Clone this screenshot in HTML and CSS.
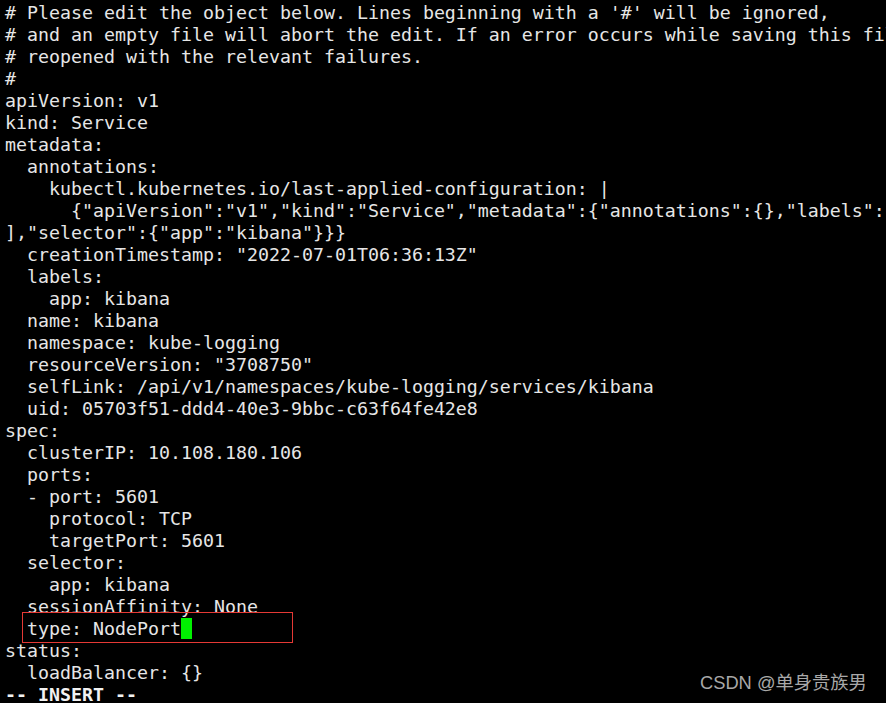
FILE: index.html
```html
<!DOCTYPE html>
<html lang="en">
<head>
<meta charset="utf-8">
<title>kubectl edit</title>
<link rel="stylesheet" href="styles.css">
</head>
<body>
<div class="term">
<pre class="buf"># Please edit the object below. Lines beginning with a '#' will be ignored,
# and an empty file will abort the edit. If an error occurs while saving this file will be
# reopened with the relevant failures.
#
apiVersion: v1
kind: Service
metadata:
  annotations:
    kubectl.kubernetes.io/last-applied-configuration: |
      {"apiVersion":"v1","kind":"Service","metadata":{"annotations":{},"labels":{"app":"kibana"}
],"selector":{"app":"kibana"}}}
  creationTimestamp: "2022-07-01T06:36:13Z"
  labels:
    app: kibana
  name: kibana
  namespace: kube-logging
  resourceVersion: "3708750"
  selfLink: /api/v1/namespaces/kube-logging/services/kibana
  uid: 05703f51-ddd4-40e3-9bbc-c63f64fe42e8
spec:
  clusterIP: 10.108.180.106
  ports:
  - port: 5601
    protocol: TCP
    targetPort: 5601
  selector:
    app: kibana
  sessionAffinity: None
  type: NodePort<span class="cursor"> </span>
status:
  loadBalancer: {}
<b class="mode">-- INSERT --</b></pre>
<div class="highlight"></div>
<div class="watermark">CSDN @单身贵族男</div>
</div>
</body>
</html>
```
FILE: styles.css
```css
html, body {
  margin: 0;
  padding: 0;
  background: #000;
  overflow: hidden;
}
.term {
  position: relative;
  width: 886px;
  height: 703px;
  overflow: hidden;
  background: #000;
}
.buf {
  margin: 0;
  padding: 2px 0 0 5px;
  font-family: "DejaVu Sans Mono", monospace;
  font-size: 18.27px;
  line-height: 22px;
  color: #e6e6e6;
  white-space: pre;
}
.cursor {
  display: inline-block;
  width: 11px;
  height: 21px;
  vertical-align: top;
  margin-top: 0;
  background: #00f000;
}
.mode {
  font-weight: bold;
  color: #f2f2f2;
}
.highlight {
  position: absolute;
  left: 22px;
  top: 612px;
  width: 269px;
  height: 29px;
  border: 1px solid #e53935;
}
.watermark {
  position: absolute;
  left: 700px;
  top: 671px;
  font-family: "Liberation Sans", "Noto Sans CJK SC", sans-serif;
  font-size: 18.3px;
  line-height: 24px;
  color: #a8a8a8;
}
```
